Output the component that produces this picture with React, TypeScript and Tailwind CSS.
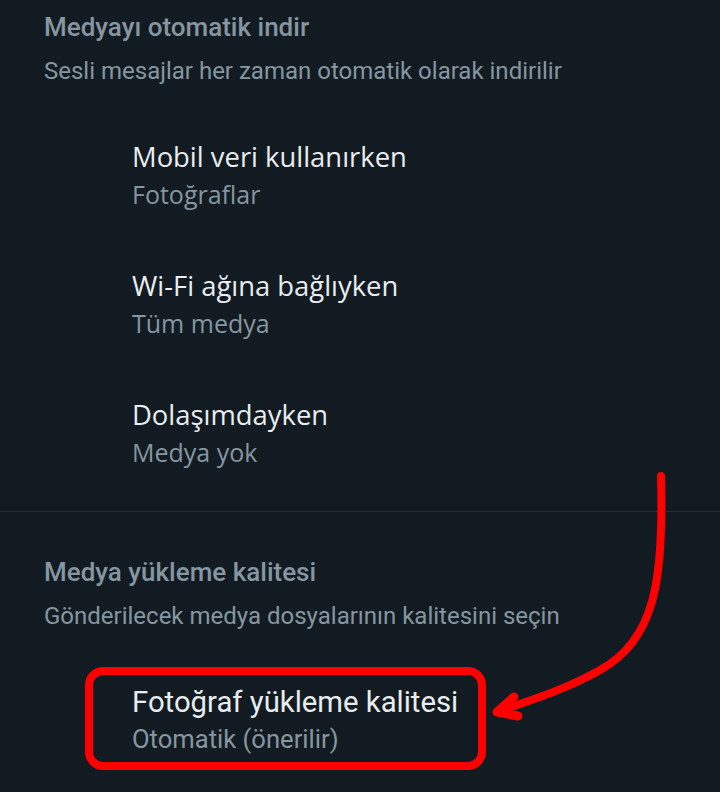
import React from "react";

const roboto = "font-['Roboto','Liberation_Sans',sans-serif]";
const open = "font-['Open_Sans','Noto_Sans',sans-serif]";

interface ItemProps {
  title: string;
  value: string;
}

function DownloadItem({ title, value }: ItemProps) {
  return (
    <div className="pl-[132px]">
      <div className={`${open} text-[27.4px] leading-[36px] text-[#e9edef]`}>{title}</div>
      <div className={`${open} text-[25px] leading-[32px] text-[#8696a0] mt-[3px]`}>{value}</div>
    </div>
  );
}

export default function App() {
  return (
    <div className="relative w-[720px] h-[792px] bg-[#111b21] overflow-hidden">
      <div className="pl-[44px] pt-[13px]">
        <div className={`${roboto} text-[26px] leading-[28px] font-medium text-[#8696a0]`}>Medyayı otomatik indir</div>
        <div className={`${roboto} text-[24px] leading-[28px] text-[#8696a0] mt-[16px]`}>
          Sesli mesajlar her zaman otomatik olarak indirilir
        </div>
      </div>

      <div className="mt-[54px] flex flex-col gap-[58px]">
        <DownloadItem title="Mobil veri kullanırken" value="Fotoğraflar" />
        <DownloadItem title="Wi-Fi ağına bağlıyken" value="Tüm medya" />
        <DownloadItem title="Dolaşımdayken" value="Medya yok" />
      </div>

      <div className="mt-[43px] h-px bg-[#222d34]" />

      <div className="pl-[44px] pt-[46px]">
        <div className={`${roboto} text-[26px] leading-[28px] font-medium text-[#8696a0]`}>Medya yükleme kalitesi</div>
        <div className={`${roboto} text-[24px] leading-[28px] text-[#8696a0] mt-[16px]`}>
          Gönderilecek medya dosyalarının kalitesini seçin
        </div>
      </div>

      <div className="pl-[132px] mt-[56px]">
        <div className={`${roboto} text-[29.3px] leading-[32px] text-[#e9edef]`}>Fotoğraf yükleme kalitesi</div>
        <div className={`${roboto} text-[25.6px] leading-[28px] text-[#8696a0] mt-[7px]`}>Otomatik (önerilir)</div>
      </div>

      {/* annotation */}
      <div className="absolute left-[85px] top-[667px] w-[401px] h-[103px] border-[8px] border-[#ff0000] rounded-[18px]" />
      <svg className="absolute left-0 top-0" width="720" height="792" viewBox="0 0 720 792" fill="none">
        <path
          d="M661 476 C664 580 655 640 600 670 C565 690 530 700 500 711"
          stroke="#ff0000"
          strokeWidth="8"
          strokeLinecap="round"
        />
        <path
          d="M514 697 L497 712 L518 716"
          stroke="#ff0000"
          strokeWidth="9"
          strokeLinecap="round"
          strokeLinejoin="round"
        />
      </svg>
    </div>
  );
}
